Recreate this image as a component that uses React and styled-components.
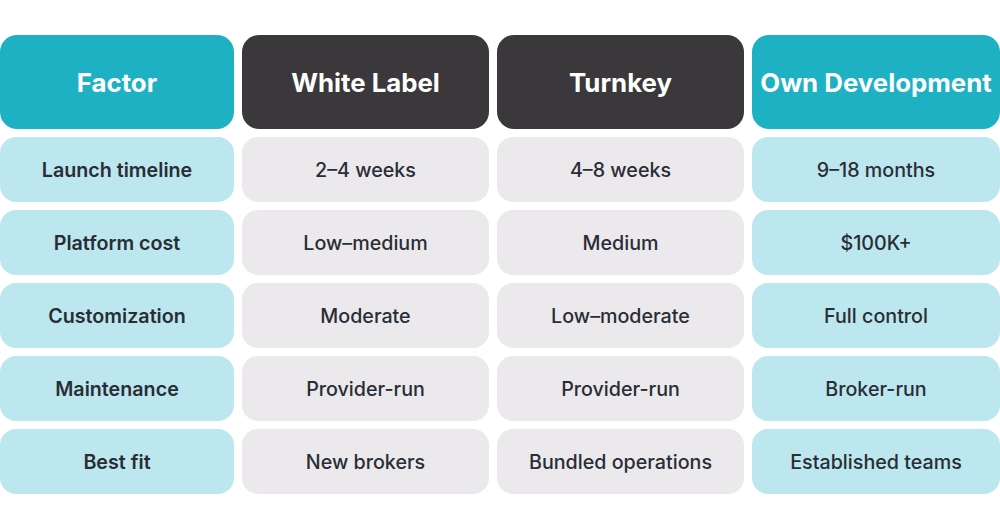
import React from "react";
import styled, { createGlobalStyle } from "styled-components";

const GlobalStyle = createGlobalStyle`
  body {
    margin: 0;
    background: #ffffff;
    font-family: Inter, "Noto Sans", sans-serif;
  }
`;

const Page = styled.div`
  width: 1000px;
  height: 530px;
  padding-top: 35px;
  box-sizing: border-box;
  overflow: hidden;
`;

const Table = styled.div`
  display: grid;
  grid-template-columns: 234px 247px 247px 248px;
  grid-template-rows: 94px repeat(5, 65px);
  column-gap: 8px;
  row-gap: 8px;
`;

const HeadCell = styled.div`
  display: flex;
  align-items: center;
  justify-content: center;
  border-radius: 17px;
  background: ${(p) => (p.$dark ? "#3a383b" : "#1eb1c4")};
  color: #ffffff;
  font-size: 25.8px;
  font-weight: 700;
  white-space: nowrap;
`;

const Cell = styled.div`
  display: flex;
  align-items: center;
  justify-content: center;
  border-radius: 16px;
  background: ${(p) => (p.$teal ? "#bde7ee" : "#ebe9ec")};
  color: #292d35;
  font-size: 19.7px;
  font-weight: ${(p) => (p.$label ? 600 : 500)};
  white-space: nowrap;
`;

const headers = [
  { title: "Factor", dark: false },
  { title: "White Label", dark: true },
  { title: "Turnkey", dark: true },
  { title: "Own Development", dark: false },
];

const rows = [
  ["Launch timeline", "2–4 weeks", "4–8 weeks", "9–18 months"],
  ["Platform cost", "Low–medium", "Medium", "$100K+"],
  ["Customization", "Moderate", "Low–moderate", "Full control"],
  ["Maintenance", "Provider-run", "Provider-run", "Broker-run"],
  ["Best fit", "New brokers", "Bundled operations", "Established teams"],
];

export default function App() {
  return (
    <>
      <GlobalStyle />
      <Page>
        <Table>
          {headers.map((h) => (
            <HeadCell key={h.title} $dark={h.dark}>
              {h.title}
            </HeadCell>
          ))}
          {rows.map((row) =>
            row.map((value, i) => (
              <Cell
                key={`${row[0]}-${i}`}
                $teal={i === 0 || i === 3}
                $label={i === 0}
              >
                {value}
              </Cell>
            ))
          )}
        </Table>
      </Page>
    </>
  );
}
